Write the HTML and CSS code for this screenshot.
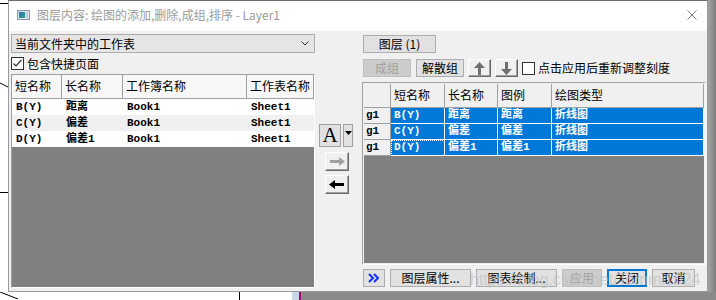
FILE: index.html
```html
<!DOCTYPE html>
<html lang="zh-CN">
<head>
    <meta charset="UTF-8" />
    <title>图层内容</title>
    <link rel="stylesheet" href="styles.css">
</head>
<body>
<div class="screen">
    <!-- 背后的图形窗口 -->
    <div class="edge-left">
        <svg width="8" height="292" viewBox="0 0 8 292">
            <path d="M0 3.5H8M0 83L8 87M0 192.5H8" stroke="#000" stroke-width="1" fill="none"/>
        </svg>
    </div>

    <div class="dialog">
        <div class="titlebar">
            <svg class="app-icon" width="13" height="10" viewBox="0 0 13 10">
                <defs>
                    <linearGradient id="ig" x1="0" y1="0" x2="1" y2="1">
                        <stop offset="0" stop-color="#2f6db5"/>
                        <stop offset="1" stop-color="#35a58a"/>
                    </linearGradient>
                </defs>
                <rect x="0.5" y="0.5" width="12" height="9" fill="#dfe6ee" stroke="#8a96a4"/>
                <rect x="2" y="2" width="6" height="6" fill="url(#ig)"/>
                <rect x="9" y="2" width="2" height="6" fill="#b9c9d9"/>
            </svg>
            <span class="title">图层内容: 绘图的添加,删除,成组,排序 - Layer1</span>
            <svg class="close" width="10" height="10" viewBox="0 0 10 10">
                <path d="M0.5 0.5L9.5 9.5M9.5 0.5L0.5 9.5" stroke="#7a7a7a" stroke-width="1"/>
            </svg>
        </div>

        <div class="dlg-body">
            <!-- 左: 工作表列表 -->
            <div class="col-left">
                <div class="combo">
                    <span>当前文件夹中的工作表</span>
                    <svg width="8" height="5" viewBox="0 0 8 5"><polyline points="0.5,0.5 4,4 7.5,0.5" fill="none" stroke="#333"/></svg>
                </div>
                <div class="check-row">
                    <span class="box">
                        <svg width="11" height="11" viewBox="0 0 11 11"><polyline points="1.5,5.5 4,8 9.5,2" fill="none" stroke="#333" stroke-width="1.2"/></svg>
                    </span>
                    <span>包含快捷页面</span>
                </div>
                <div class="list list-left">
                    <div class="lrow lhead">
                        <div>短名称</div><div>长名称</div><div>工作簿名称</div><div>工作表名称</div>
                    </div>
                    <div class="lrow">
                        <div>B(Y)</div><div>距离</div><div>Book1</div><div>Sheet1</div>
                    </div>
                    <div class="lrow alt">
                        <div>C(Y)</div><div>偏差</div><div>Book1</div><div>Sheet1</div>
                    </div>
                    <div class="lrow">
                        <div>D(Y)</div><div>偏差1</div><div>Book1</div><div>Sheet1</div>
                    </div>
                </div>
            </div>

            <!-- 中: 添加/移除 -->
            <div class="col-mid">
                <div class="font-row">
                    <button class="font-btn">A</button>
                    <button class="drop-btn">
                        <svg width="7" height="4" viewBox="0 0 7 4"><polygon points="0,0 7,0 3.5,4" fill="#000"/></svg>
                    </button>
                </div>
                <button class="raised move-btn">
                    <svg width="16" height="9" viewBox="0 0 16 9"><polygon points="16,4.5 10,0 10,3 1,3 1,6 10,6 10,9" fill="#a0a0a0"/></svg>
                </button>
                <button class="raised move-btn">
                    <svg width="16" height="9" viewBox="0 0 16 9"><polygon points="0,4.5 6,0 6,3 15,3 15,6 6,6 6,9" fill="#000"/></svg>
                </button>
            </div>

            <!-- 右: 图层内容 -->
            <div class="col-right">
                <button class="btn tab-btn">图层 (1)</button>
                <div class="tool-row">
                    <button class="btn disabled w-group">成组</button>
                    <button class="btn w-group">解散组</button>
                    <button class="raised updown">
                        <svg width="11" height="13" viewBox="0 0 11 13"><polygon points="5.5,0 11,6 7,6 7,13 4,13 4,6 0,6" fill="#707070"/></svg>
                    </button>
                    <button class="raised updown">
                        <svg width="11" height="13" viewBox="0 0 11 13"><polygon points="5.5,13 11,7 7,7 7,0 4,0 4,7 0,7" fill="#707070"/></svg>
                    </button>
                    <span class="box empty"></span>
                    <span class="check-label">点击应用后重新调整刻度</span>
                </div>
                <div class="list list-right">
                    <div class="rlist">
                        <div class="rrow rhead">
                            <div></div><div>短名称</div><div>长名称</div><div>图例</div><div>绘图类型</div>
                        </div>
                        <div class="rrow sel">
                            <div>g1</div><div>B(Y)</div><div>距离</div><div>距离</div><div>折线图</div>
                        </div>
                        <div class="rrow sel">
                            <div>g1</div><div>C(Y)</div><div>偏差</div><div>偏差</div><div>折线图</div>
                        </div>
                        <div class="rrow sel">
                            <div>g1</div><div class="focus">D(Y)</div><div>偏差1</div><div>偏差1</div><div>折线图</div>
                        </div>
                    </div>
                </div>
                <div class="btn-row">
                    <button class="btn more">
                        <svg width="12" height="10" viewBox="0 0 12 10"><path d="M1 1L5 5L1 9M6 1L10 5L6 9" fill="none" stroke="#1030ff" stroke-width="2"/></svg>
                    </button>
                    <button class="btn w-wide">图层属性...</button>
                    <button class="btn w-wide">图表绘制...</button>
                    <button class="btn disabled w-small">应用</button>
                    <button class="btn default w-small">关闭</button>
                    <button class="btn w-cancel">取消</button>
                </div>
            </div>

            <span class="watermark">https://blog.csdn.net/Tommi1024</span>
        </div>
    </div>

    <div class="edge-right"></div>

    <div class="edge-bottom">
        <svg width="716" height="8" viewBox="0 0 716 8">
            <path d="M0 0L18 7M239.5 0V8" stroke="#000" stroke-width="1" fill="none"/>
        </svg>
    </div>
</div>
</body>
</html>
```

FILE: styles.css
```css
/* 기본 */
* { box-sizing: border-box; }
html, body {
    margin: 0;
    padding: 0;
    width: 716px;
    height: 300px;
    overflow: hidden;
    background: #fff;
    font-family: "Noto Sans CJK SC", "Liberation Sans", sans-serif;
    font-size: 12px;
    color: #000;
}
button {
    font-family: inherit;
    font-size: 12px;
    color: #000;
    margin: 0;
    padding: 0;
    cursor: default;
}
svg { display: block; }

.screen {
    display: grid;
    grid-template-columns: 8px 700px 8px;
    grid-template-rows: 292px 8px;
}
.edge-right { background: linear-gradient(to right, #a4a4a4, #7e7e7e); }
.edge-bottom {
    grid-column: 1 / -1;
    background: linear-gradient(to right, #fff 0 292px, #c9d7e6 292px 299px, #a1087d 299px 301px, #8a8a8a 301px);
}

/* 대화상자 */
.dialog {
    border: 1px solid #9a9a9a;
    border-top-color: #6e6e6e;
    background: #f0f0f0;
    display: flex;
    flex-direction: column;
}
.titlebar {
    height: 30px;
    flex: none;
    background: #fff;
    display: flex;
    align-items: center;
    padding: 0 10px 3px 8px;
}
.app-icon { margin-right: 7px; }
.title { color: #9a9a9a; line-height: 16px; }
.close { margin-left: auto; }

.dlg-body {
    flex: 1;
    display: flex;
    padding: 3px 1px 3px 2px;
    position: relative;
}

/* 왼쪽 */
.col-left { width: 304px; display: flex; flex-direction: column; }
.combo {
    height: 19px;
    border: 1px solid #adadad;
    background: #e5e5e5;
    display: flex;
    align-items: center;
    justify-content: space-between;
    padding: 0 5px 0 3px;
    line-height: 16px;
}
.check-row {
    height: 13px;
    margin-top: 4px;
    display: flex;
    align-items: center;
    gap: 3px;
    line-height: 13px;
}
.box {
    width: 13px;
    height: 13px;
    flex: none;
    border: 1px solid #333;
    background: #fff;
}
.list {
    border: 1px solid;
    border-color: #a0a0a0 #fff #fff #a0a0a0;
    background: #808080;
}
.list-left { margin-top: 4px; height: 214px; }
.lrow {
    display: grid;
    grid-template-columns: 50px 61px 124px 67px;
    height: 16px;
    background: #fff;
    font-family: "Liberation Mono", "Noto Sans CJK SC", monospace;
    font-weight: bold;
    font-size: 11px;
    line-height: 16px;
}
.lrow > div { padding-left: 4px; white-space: nowrap; overflow: hidden; }
.lrow.alt { background: #f0f0f0; }
.lrow.lhead {
    height: 24px;
    background: #f7f7f7;
    font-family: "Noto Sans CJK SC", sans-serif;
    font-weight: normal;
    font-size: 12px;
    line-height: 22px;
}
.lrow.lhead > div {
    padding-left: 3px;
    border-right: 1px solid #a0a0a0;
    border-bottom: 1px solid #a0a0a0;
}

/* 가운데 */
.col-mid { width: 47px; padding-top: 90px; display: flex; flex-direction: column; }
.font-row { display: flex; gap: 2px; margin-left: 4px; height: 23px; }
.font-btn {
    width: 22px;
    height: 23px;
    border: 1px solid #a0a0a0;
    background: #e1e1e1;
    font-family: "Liberation Serif", serif;
    font-size: 21px;
    line-height: 21px;
}
.drop-btn {
    width: 10px;
    height: 23px;
    border: 1px solid #a0a0a0;
    background: #e1e1e1;
    display: flex;
    justify-content: center;
    padding-top: 6px;
}
.raised {
    border: 1px solid;
    border-color: #fff #696969 #696969 #fff;
    box-shadow: inset -1px -1px 0 #a0a0a0;
    background: #f0f0f0;
    display: flex;
    align-items: center;
    justify-content: center;
}
.move-btn { width: 24px; height: 19px; margin-left: 10px; margin-top: 5px; }
.move-btn + .move-btn { margin-top: 4px; }

/* 오른쪽 */
.col-right { width: 344px; display: flex; flex-direction: column; }
.btn {
    height: 18px;
    border: 1px solid #adadad;
    background: #e1e1e1;
    line-height: 16px;
    white-space: nowrap;
}
.btn.disabled { background: #cccccc; border-color: #bfbfbf; color: #a0a0a0; }
.btn.default { border: 2px solid #0078d7; line-height: 14px; }
.tab-btn { width: 73px; margin: 1px 0 0 1px; }

.tool-row {
    height: 18px;
    margin-top: 6px;
    display: flex;
    align-items: center;
    padding-left: 1px;
}
.w-group { width: 48px; margin-right: 5px; }
.w-group + .w-group { margin-right: 4px; }
.updown { width: 23px; height: 18px; margin-right: 4px; }
.box.empty { border-color: #333; margin-right: 3px; }
.check-label { line-height: 16px; }

.list-right {
    margin-top: 5px;
    height: 183px;
    padding: 1px;
    background: #f0f0f0;
}
.rlist { height: 100%; background: #808080; }
.rrow {
    display: grid;
    grid-template-columns: 27px 54px 53px 54px 152px;
    height: 16px;
    font-family: "Liberation Mono", "Noto Sans CJK SC", monospace;
    font-weight: bold;
    font-size: 11px;
    line-height: 15px;
}
.rrow > div { padding-left: 3px; white-space: nowrap; }
.rrow.sel > div {
    background: #0078d7;
    color: #fff;
    border-right: 1px solid #fff;
    border-bottom: 1px solid #fff;
}
.rrow.sel > div:first-child,
.rrow.rhead > div {
    background: #f0f0f0;
    color: #000;
    border-right: 1px solid #a0a0a0;
    border-bottom: 1px solid #a0a0a0;
    padding-left: 2px;
}
.rrow.rhead {
    height: 24px;
    font-family: "Noto Sans CJK SC", sans-serif;
    font-weight: normal;
    font-size: 12px;
    line-height: 22px;
}
.rrow.rhead > div { padding-left: 3px; }
.rrow .focus { outline: 1px dotted #fff; outline-offset: -1px; }

.btn-row {
    height: 18px;
    margin-top: 4px;
    display: flex;
    gap: 5px;
    padding-left: 1px;
}
.more { width: 22px; display: flex; align-items: center; justify-content: center; }
.w-wide { width: 81px; }
.w-small { width: 40px; }
.w-cancel { width: 43px; }

.watermark {
    position: absolute;
    left: 461px;
    top: 240px;
    font-family: "Liberation Sans", sans-serif;
    font-size: 16px;
    line-height: 18px;
    color: rgba(190, 190, 190, 0.65);
    pointer-events: none;
    white-space: nowrap;
}
```
